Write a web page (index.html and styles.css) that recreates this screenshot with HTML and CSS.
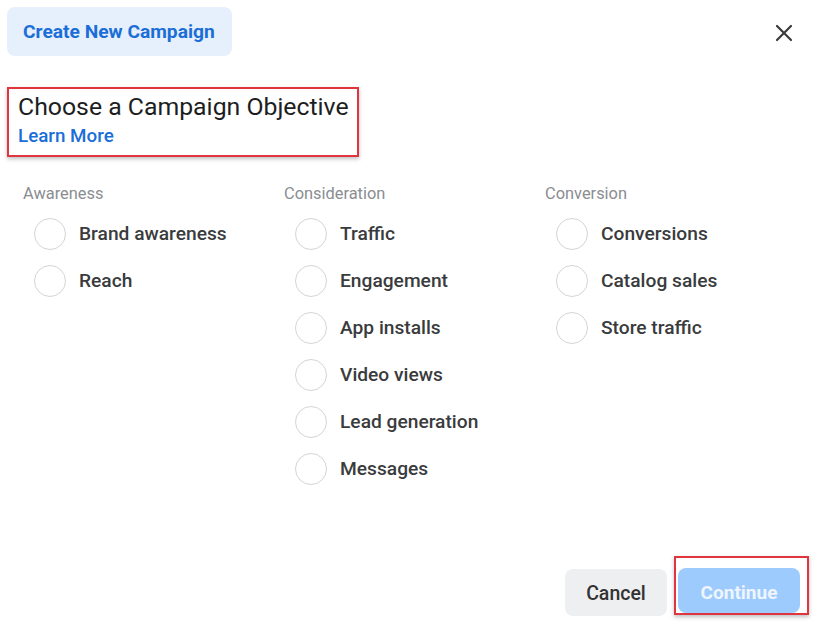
FILE: index.html
```html
<!DOCTYPE html>
<html>
<head>
<meta charset="utf-8">
<link rel="stylesheet" href="styles.css">
</head>
<body>
<div class="modal">
  <div class="top">
    <div class="tab">Create New Campaign</div>
    <button class="close" aria-label="Close">
      <svg width="18" height="18" viewBox="0 0 18 18"><path d="M2 2L16 16M16 2L2 16" stroke="#3a3b3c" stroke-width="2.2" stroke-linecap="round"/></svg>
    </button>
  </div>
  <div class="title-box">
    <div class="title">Choose a Campaign Objective</div>
    <a class="learn">Learn More</a>
  </div>
  <div class="columns">
    <div class="col">
      <div class="col-head">Awareness</div>
      <div class="opt"><span class="radio"></span><span class="label">Brand awareness</span></div>
      <div class="opt"><span class="radio"></span><span class="label">Reach</span></div>
    </div>
    <div class="col">
      <div class="col-head">Consideration</div>
      <div class="opt"><span class="radio"></span><span class="label">Traffic</span></div>
      <div class="opt"><span class="radio"></span><span class="label">Engagement</span></div>
      <div class="opt"><span class="radio"></span><span class="label">App installs</span></div>
      <div class="opt"><span class="radio"></span><span class="label">Video views</span></div>
      <div class="opt"><span class="radio"></span><span class="label">Lead generation</span></div>
      <div class="opt"><span class="radio"></span><span class="label">Messages</span></div>
    </div>
    <div class="col">
      <div class="col-head">Conversion</div>
      <div class="opt"><span class="radio"></span><span class="label">Conversions</span></div>
      <div class="opt"><span class="radio"></span><span class="label">Catalog sales</span></div>
      <div class="opt"><span class="radio"></span><span class="label">Store traffic</span></div>
    </div>
  </div>
  <div class="footer">
    <button class="btn cancel">Cancel</button>
    <div class="continue-box"><button class="btn continue">Continue</button></div>
  </div>
</div>
</body>
</html>
```
FILE: styles.css
```css
* { box-sizing: border-box; }
html, body { margin: 0; padding: 0; background: #fff; }
body { font-family: Roboto, "Liberation Sans", Arial, sans-serif; color: #1c1e21; }
.modal { width: 817px; height: 628px; display: flex; flex-direction: column; }
.top { display: flex; justify-content: space-between; align-items: flex-start; padding: 7px 0 0 7px; }
.tab { width: 225px; height: 49px; background: #e6f0fc; border-radius: 8px; color: #1b6ed8; font-weight: 700; font-size: 19.2px; display: flex; align-items: center; padding-left: 16px; }
.close { background: none; border: 0; padding: 0; margin: 17px 24px 0 0; width: 18px; height: 18px; display: block; }
.close svg { display: block; }
.title-box { margin: 31px 0 0 7px; width: 352px; height: 70px; border: 2px solid #e0353f; box-shadow: 0 2px 4px rgba(0,0,0,0.25); padding: 4px 0 0 9px; }
.title { font-size: 24.8px; line-height: 28px; color: #1c1e21; }
.learn { display: block; margin-top: 4px; font-size: 18.8px; line-height: 22px; color: #1a6ed8; font-weight: 500; }
.columns { display: flex; padding: 28px 0 0 23px; }
.col { width: 261px; }
.col-head { font-size: 16.4px; line-height: 18px; color: #8a8d91; margin-bottom: 7px; }
.opt { display: flex; align-items: center; height: 47px; padding-left: 11px; }
.radio { width: 32px; height: 32px; border-radius: 50%; border: 1.5px solid #d3d5d8; flex: none; }
.label { margin-left: 13px; font-size: 19.2px; font-weight: 500; color: #3a3b3d; }
.footer { margin-top: auto; display: flex; justify-content: flex-end; align-items: flex-end; padding: 0 8px 12px 0; }
.btn { border: 0; border-radius: 8px; font-family: inherit; font-size: 19.5px; font-weight: 500; height: 47px; }
.cancel { width: 102px; background: #eeeff1; color: #333; margin-right: 7px; padding-top: 2px; }
.continue-box { border: 2px solid #e0353f; box-shadow: 0 2px 4px rgba(0,0,0,0.25); padding: 10px 7px 0 2px; height: 59px; margin-bottom: 1px; }
.continue { width: 122px; height: 45px; background: #9ecbfd; color: #eef5ff; font-weight: 700; font-size: 19px; display: block; padding-top: 5px; }
```
